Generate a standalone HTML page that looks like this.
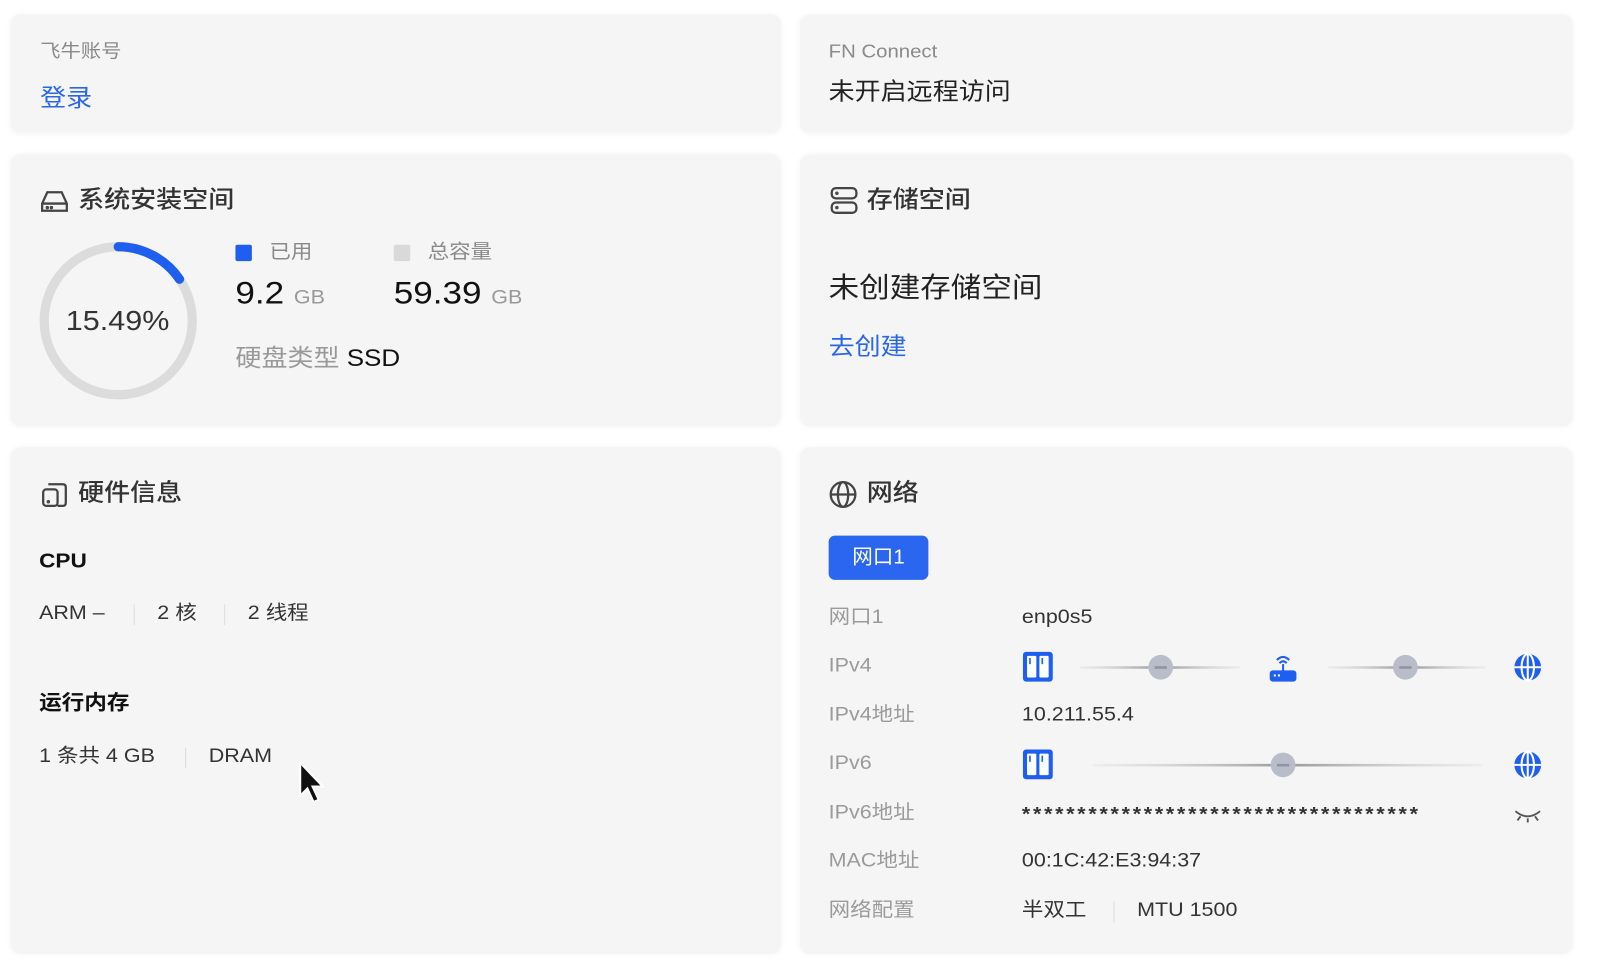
<!DOCTYPE html>
<html><head><meta charset="utf-8">
<style>
html,body{margin:0;padding:0;background:#fff;width:1612px;height:978px;overflow:hidden;}
#w{position:absolute;left:0;top:0;width:1568px;height:951px;transform:scale(1.0281);transform-origin:0 0;font-family:"Liberation Sans","Noto Sans CJK SC",sans-serif;color:#222;}
.c{position:absolute;background:#f5f5f5;border-radius:10px;box-shadow:0 0 6px rgba(0,0,0,0.04);}
.t{position:absolute;white-space:nowrap;line-height:1;transform:scaleX(1.1);transform-origin:left center;}
.g{color:#8a8a8a}
.b{color:#2a66e8}
.h{font-size:23px;color:#333;font-weight:500}
.lab{font-size:19px;color:#9a9a9a}
.val{font-size:19px;color:#333}
.sep{position:absolute;width:1px;height:20px;background:#ddd}
svg{position:absolute;overflow:visible}
</style></head><body><div id="w">
<div class="c" style="left:10px;top:14px;width:750px;height:116px"></div>
<div class="c" style="left:778px;top:14px;width:752px;height:116px"></div>
<div class="c" style="left:10px;top:150px;width:750px;height:265px"></div>
<div class="c" style="left:778px;top:150px;width:752px;height:265px"></div>
<div class="c" style="left:10px;top:435px;width:750px;height:493px"></div>
<div class="c" style="left:778px;top:435px;width:752px;height:493px"></div>

<div class="t g" style="left:39px;top:41px;font-size:18px">飞牛账号</div>
<div class="t b" style="left:39px;top:84px;font-size:23px">登录</div>
<div class="t g" style="left:806px;top:41px;font-size:18px">FN Connect</div>
<div class="t" style="left:806px;top:78px;font-size:23px;color:#222">未开启远程访问</div>

<svg style="left:39px;top:184px" width="28" height="24" viewBox="0 0 28 24" fill="none" stroke="#444" stroke-width="2.2"><path d="M2 14 L7 3 H21 L26 14 V21 H2 Z M2 14 H26"/><circle cx="7" cy="18" r="0.6" fill="#444"/><circle cx="11" cy="18" r="0.6" fill="#444"/></svg>
<div class="t h" style="left:76px;top:183px">系统安装空间</div>
<svg style="left:38px;top:235px" width="154" height="154" viewBox="0 0 154 154"><circle cx="77" cy="77" r="72" fill="none" stroke="#dcdcdc" stroke-width="9"/><path d="M77 5 A72 72 0 0 1 136.6 36.6" fill="none" stroke="#1f5ff0" stroke-width="9" stroke-linecap="round"/></svg>
<div class="t" style="left:64px;top:299px;font-size:27px;color:#333">15.49%</div>
<div style="position:absolute;left:229px;top:238px;width:16px;height:16px;background:#1f5ff0;border-radius:2px"></div>
<div class="t g" style="left:262px;top:236px;font-size:19px">已用</div>
<div style="position:absolute;left:383px;top:238px;width:16px;height:16px;background:#d9d9d9;border-radius:2px"></div>
<div class="t g" style="left:416px;top:236px;font-size:19px">总容量</div>
<div class="t" style="left:229px;top:269px;font-size:31px;color:#111">9.2 <span style="font-size:19px;color:#999">GB</span></div>
<div class="t" style="left:383px;top:269px;font-size:31px;color:#111">59.39 <span style="font-size:19px;color:#999">GB</span></div>
<div class="t" style="left:229px;top:337px;font-size:23px;color:#999">硬盘类型 <span style="color:#111">SSD</span></div>

<svg style="left:807px;top:181px" width="28" height="28" viewBox="0 0 28 28" fill="none" stroke="#444" stroke-width="2.2"><rect x="2" y="2" width="24" height="10" rx="4"/><rect x="2" y="16" width="24" height="10" rx="4"/><circle cx="7" cy="7" r="0.6" fill="#444"/><circle cx="7" cy="21" r="0.6" fill="#444"/></svg>
<div class="t h" style="left:843px;top:183px">存储空间</div>
<div class="t" style="left:806px;top:267px;font-size:27px;color:#222">未创建存储空间</div>
<div class="t b" style="left:806px;top:326px;font-size:23px">去创建</div>

<svg style="left:39px;top:467px" width="28" height="28" viewBox="0 0 28 28" fill="none" stroke="#444" stroke-width="2.2"><path d="M8 4 H22 Q25 4 25 7 V22 Q25 25 22 25 H17"/><rect x="3" y="9" width="14" height="16" rx="3"/><circle cx="8" cy="21" r="0.6" fill="#444"/></svg>
<div class="t h" style="left:76px;top:468px">硬件信息</div>
<div class="t" style="left:38px;top:536px;font-size:20px;font-weight:bold;color:#111">CPU</div>
<div class="t val" style="left:38px;top:587px">ARM –</div>
<div class="sep" style="left:130px;top:588px"></div>
<div class="t val" style="left:153px;top:587px">2 核</div>
<div class="sep" style="left:218px;top:588px"></div>
<div class="t val" style="left:241px;top:587px">2 线程</div>
<div class="t" style="left:38px;top:674px;font-size:20px;font-weight:bold;color:#111">运行内存</div>
<div class="t val" style="left:38px;top:726px">1 条共 4 GB</div>
<div class="sep" style="left:180px;top:727px"></div>
<div class="t val" style="left:203px;top:726px">DRAM</div>
<svg style="left:290px;top:740px" width="30" height="46" viewBox="0 0 30 46"><path d="M2 2 V34 L9 27 L15 40 L20 38 L14 25 H24 Z" fill="#111" stroke="#fff" stroke-width="2"/></svg>

<svg style="left:806px;top:467px" width="28" height="28" viewBox="0 0 28 28" fill="none" stroke="#444" stroke-width="2.2"><circle cx="14" cy="14" r="12"/><ellipse cx="14" cy="14" rx="5" ry="12"/><path d="M2 14 H26"/></svg>
<div class="t h" style="left:843px;top:468px">网络</div>
<div style="position:absolute;left:806px;top:521px;width:97px;height:43px;background:#2a66f0;border-radius:6px;color:#fff;font-size:20px;line-height:43px;text-align:center">网口1</div>

<div class="t lab" style="left:806px;top:591px">网口1</div><div class="t val" style="left:994px;top:591px">enp0s5</div>
<div class="t lab" style="left:806px;top:638px">IPv4</div>
<div class="t lab" style="left:806px;top:686px">IPv4地址</div><div class="t val" style="left:994px;top:686px">10.211.55.4</div>
<div class="t lab" style="left:806px;top:733px">IPv6</div>
<div class="t lab" style="left:806px;top:781px">IPv6地址</div><div class="t val" style="left:994px;top:783px;letter-spacing:2.4px;font-weight:bold">************************************</div>
<div class="t lab" style="left:806px;top:828px">MAC地址</div><div class="t val" style="left:994px;top:828px">00:1C:42:E3:94:37</div>
<div class="t lab" style="left:806px;top:876px">网络配置</div><div class="t val" style="left:994px;top:876px">半双工</div>
<div class="sep" style="left:1083px;top:877px"></div>
<div class="t val" style="left:1106px;top:876px">MTU 1500</div>

<svg style="left:995px;top:634px" width="29" height="29" viewBox="0 0 29 29"><rect x="0" y="0" width="29" height="29" rx="3" fill="#1f5ff0"/><rect x="4" y="4" width="9" height="21" rx="1" fill="#fff"/><rect x="16" y="4" width="9" height="21" rx="1" fill="#fff"/><rect x="6" y="6" width="1.6" height="6" fill="#1f5ff0"/><rect x="18" y="6" width="1.6" height="6" fill="#1f5ff0"/></svg>
<svg style="left:1050px;top:636px" width="160" height="26"><defs><linearGradient id="lg" x1="0" x2="1"><stop offset="0" stop-color="#ccc" stop-opacity="0.2"/><stop offset="0.5" stop-color="#999"/><stop offset="1" stop-color="#ccc" stop-opacity="0.2"/></linearGradient></defs><rect x="0" y="12" width="156" height="2.5" fill="url(#lg)"/><circle cx="79" cy="13" r="12" fill="#b9bdc9"/><rect x="73" y="12" width="12" height="2.5" fill="#8f94a2"/></svg>
<svg style="left:1234px;top:634px" width="28" height="30" viewBox="0 0 28 30" fill="none"><path d="M8 8 Q14 2 20 8 M10.5 11 Q14 7.5 17.5 11" stroke="#1f5ff0" stroke-width="2"/><rect x="13" y="12" width="2" height="7" fill="#1f5ff0"/><rect x="1" y="18" width="26" height="11" rx="3" fill="#1f5ff0"/><rect x="5" y="22" width="2" height="2" fill="#fff"/><rect x="9" y="22" width="2" height="2" fill="#fff"/></svg>
<svg style="left:1292px;top:636px" width="160" height="26"><rect x="0" y="12" width="153" height="2.5" fill="url(#lg)"/><circle cx="75" cy="13" r="12" fill="#b9bdc9"/><rect x="69" y="12" width="12" height="2.5" fill="#8f94a2"/></svg>
<svg style="left:1472px;top:635px" width="28" height="28" viewBox="0 0 28 28"><circle cx="14" cy="14" r="13" fill="#1f5ff0"/><ellipse cx="14" cy="14" rx="6" ry="13" fill="none" stroke="#fff" stroke-width="2"/><path d="M14 1 V27 M1 14 H27" stroke="#fff" stroke-width="2"/></svg>

<svg style="left:995px;top:729px" width="29" height="29" viewBox="0 0 29 29"><rect x="0" y="0" width="29" height="29" rx="3" fill="#1f5ff0"/><rect x="4" y="4" width="9" height="21" rx="1" fill="#fff"/><rect x="16" y="4" width="9" height="21" rx="1" fill="#fff"/><rect x="6" y="6" width="1.6" height="6" fill="#1f5ff0"/><rect x="18" y="6" width="1.6" height="6" fill="#1f5ff0"/></svg>
<svg style="left:1063px;top:731px" width="380" height="26"><rect x="0" y="12" width="378" height="2.5" fill="url(#lg)"/><circle cx="185" cy="13" r="12" fill="#b9bdc9"/><rect x="179" y="12" width="12" height="2.5" fill="#8f94a2"/></svg>
<svg style="left:1472px;top:730px" width="28" height="28" viewBox="0 0 28 28"><circle cx="14" cy="14" r="13" fill="#1f5ff0"/><ellipse cx="14" cy="14" rx="6" ry="13" fill="none" stroke="#fff" stroke-width="2"/><path d="M14 1 V27 M1 14 H27" stroke="#fff" stroke-width="2"/></svg>

<svg style="left:1472px;top:785px" width="28" height="18" viewBox="0 0 28 18" fill="none" stroke="#555" stroke-width="1.8"><path d="M2 4 Q14 14 26 4 M7 9 L4 13 M14 11 V15 M21 9 L24 13"/></svg>
</div></body></html>
